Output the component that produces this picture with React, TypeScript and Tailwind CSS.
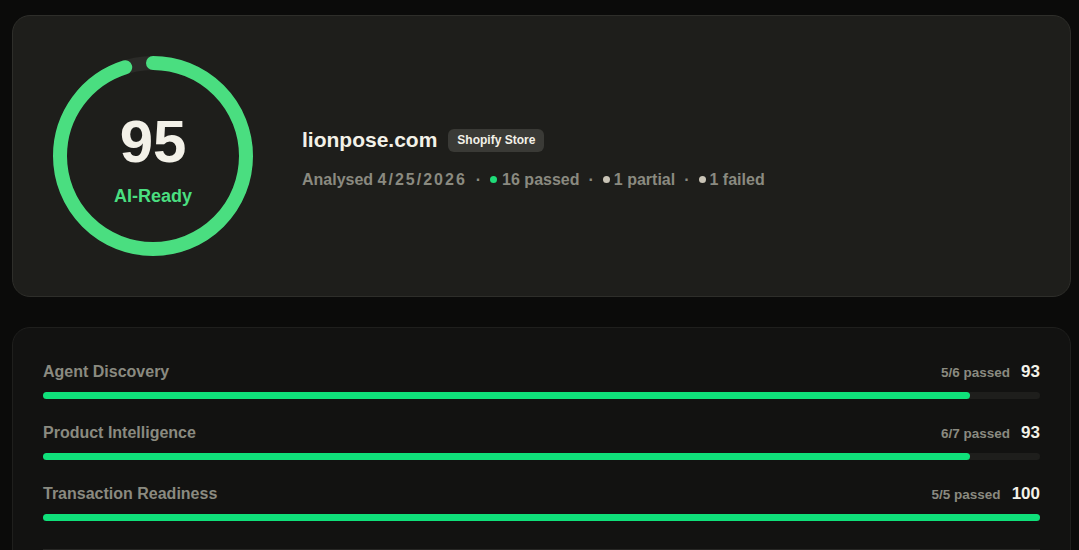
import React from "react";

const CATEGORIES = [
	{ label: "Agent Discovery", passed: "5/6 passed", score: 93 },
	{ label: "Product Intelligence", passed: "6/7 passed", score: 93 },
	{ label: "Transaction Readiness", passed: "5/5 passed", score: 100 },
];

function ScoreRing({ score }: { score: number }) {
	const r = 93;
	const c = 2 * Math.PI * r;
	return (
		<div className="relative h-[200px] w-[200px] shrink-0">
			<svg width="200" height="200" viewBox="0 0 200 200" className="-rotate-90">
				<circle cx="100" cy="100" r={r} fill="none" stroke="#2b2b28" strokeWidth="14" />
				<circle
					cx="100"
					cy="100"
					r={r}
					fill="none"
					stroke="#4ade80"
					strokeWidth="14"
					strokeLinecap="round"
					strokeDasharray={`${(c * score) / 100} ${c}`}
				/>
			</svg>
			<div className="absolute inset-0 flex flex-col items-center justify-center pt-1">
				<span className="text-[60px] leading-none font-bold text-[#f3f1e8]">{score}</span>
				<span className="mt-[15px] text-[18px] leading-none font-bold text-[#4ade80]">AI-Ready</span>
			</div>
		</div>
	);
}

function Dot({ color }: { color: string }) {
	return <span className={`inline-block h-[7px] w-[7px] rounded-full ${color}`} />;
}

export default function App() {
	return (
		<div
			className="h-[550px] overflow-hidden bg-[#0b0b0a] pt-[15px] pr-2 pl-3"
			style={{ fontFamily: "'Liberation Sans', Arial, sans-serif" }}
		>
			<div className="flex h-[282px] items-center gap-[49px] rounded-[18px] border border-[#2e2e2a] bg-[#1e1e1b] px-10">
				<ScoreRing score={95} />
				<div className="flex flex-col gap-[12px] pt-1">
					<div className="flex items-center gap-[11px]">
						<h1 className="text-[21px] font-bold text-[#f3f1e8]">lionpose.com</h1>
						<span className="flex h-[23px] items-center rounded-md bg-[#3a3a36] px-[9px] text-[12px] font-bold text-[#f3f1e8]">
							Shopify Store
						</span>
					</div>
					<div className="flex items-center gap-[9px] text-[16px] font-bold text-[#8a8a80]">
						<span>
							Analysed <span className="tracking-[2px]">4/25/2026</span>
						</span>
						<span>·</span>
						<span className="flex items-center gap-[5px]">
							<Dot color="bg-[#1fdc78]" />
							16 passed
						</span>
						<span>·</span>
						<span className="flex items-center gap-[4px]">
							<Dot color="bg-[#c9c4b6]" />
							1 partial
						</span>
						<span>·</span>
						<span className="flex items-center gap-[4px]">
							<Dot color="bg-[#c9c4b6]" />
							1 failed
						</span>
					</div>
				</div>
			</div>

			<div className="mt-[30px] h-[260px] rounded-[18px] border border-[#1f1f1d] bg-[#121211] px-[30px] pt-[35px]">
				<div className="flex flex-col gap-[25px]">
					{CATEGORIES.map((cat) => (
						<div key={cat.label} className="flex flex-col gap-[11px]">
							<div className="flex h-[18px] items-center justify-between">
								<span className="text-[16px] font-bold text-[#8a8a80]">{cat.label}</span>
								<div className="flex items-baseline gap-[11px]">
									<span className="text-[13.5px] font-bold text-[#8a8a80]">{cat.passed}</span>
									<span className="text-[17px] font-bold text-[#f3f1e8]">{cat.score}</span>
								</div>
							</div>
							<div className="h-[7px] w-full rounded-full bg-[#1e1e1c]">
								<div className="h-full rounded-full bg-[#0fe07a]" style={{ width: `${cat.score}%` }} />
							</div>
						</div>
					))}
				</div>
				<div className="mt-[28px] h-px bg-[#262624]" />
			</div>
		</div>
	);
}
